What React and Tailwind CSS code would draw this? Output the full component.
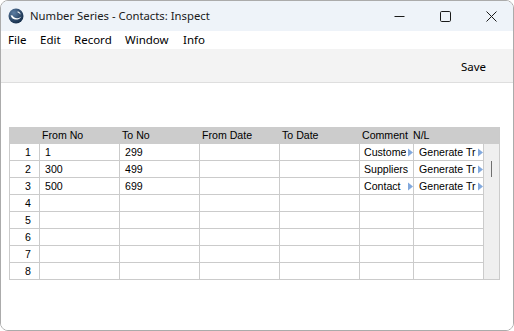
import React from "react";

const rows = [
  { n: "1", from: "1", to: "299", comment: "Custome", cTri: true, nl: "Generate Tr" },
  { n: "2", from: "300", to: "499", comment: "Suppliers", cTri: false, nl: "Generate Tr" },
  { n: "3", from: "500", to: "699", comment: "Contact", cTri: true, nl: "Generate Tr" },
  { n: "4" },
  { n: "5" },
  { n: "6" },
  { n: "7" },
  { n: "8" },
];

function Tri() {
  return (
    <span className="absolute right-0 top-1/2 -translate-y-1/2 flex h-[9px] w-[7px] items-center justify-end bg-white">
      <span className="h-0 w-0 border-y-[4px] border-y-transparent border-l-[5px] border-l-[#82a9dd]" />
    </span>
  );
}

function Logo() {
  return (
    <svg width="16" height="16" viewBox="0 0 16 16">
      <defs>
        <radialGradient id="lg" cx="0.35" cy="0.3" r="0.8">
          <stop offset="0" stopColor="#5d7ea3" />
          <stop offset="1" stopColor="#0e2643" />
        </radialGradient>
      </defs>
      <circle cx="8" cy="8" r="7.5" fill="url(#lg)" />
      <path d="M2.6 7.2 C3.6 12.2 10.4 13.4 13.4 8.4 C11.2 10.6 6.4 11.2 4.6 7.6 Z" fill="#fff" />
      <path d="M9.6 3.2 C11.4 3.6 12.6 5 12.6 6.6 C11.8 5.6 10.8 4.6 9.6 4.4 Z" fill="#fff" />
    </svg>
  );
}

export default function App() {
  const cellBase = "relative flex items-center overflow-hidden whitespace-nowrap border-r border-[#cbcbcb]";
  return (
    <div className="h-[331px] w-[514px] overflow-hidden bg-white">
      <div className="flex h-[331px] w-[514px] flex-col overflow-hidden rounded-[8px] border border-[#ababab] bg-white text-black">
        {/* Title bar */}
        <div className="flex h-[30px] shrink-0 items-center bg-[#eef3f9] font-['Noto_Sans',sans-serif] text-[11.3px] text-[#1a1a1a]">
          <div className="ml-[7px] flex h-[16px] w-[16px] items-center justify-center">
            <Logo />
          </div>
          <span className="ml-[6px] leading-none">Number Series - Contacts: Inspect</span>
          <div className="ml-auto flex h-full items-center">
            <div className="ml-[-8px] flex h-full w-[46px] items-center justify-center">
              <svg width="11" height="11" viewBox="0 0 11 11">
                <path d="M0.5 5.5 H10.5" stroke="#1a1a1a" strokeWidth="1" />
              </svg>
            </div>
            <div className="flex h-full w-[46px] items-center justify-center">
              <svg width="11" height="11" viewBox="0 0 11 11">
                <rect x="0.5" y="0.5" width="10" height="10" rx="1.2" fill="none" stroke="#1a1a1a" strokeWidth="1" />
              </svg>
            </div>
            <div className="mr-[-1px] flex h-full w-[46px] items-center justify-center">
              <svg width="11" height="11" viewBox="0 0 11 11">
                <path d="M0.5 0.5 L10.5 10.5 M10.5 0.5 L0.5 10.5" stroke="#1a1a1a" strokeWidth="1" />
              </svg>
            </div>
          </div>
        </div>

        {/* Menu bar */}
        <div className="flex h-[18px] shrink-0 items-center bg-white pl-[7px] font-['Noto_Sans',sans-serif] text-[11.5px] leading-none text-black">
          <span className="w-[32px]">File</span>
          <span className="w-[34px]">Edit</span>
          <span className="w-[51px]">Record</span>
          <span className="w-[58px]">Window</span>
          <span>Info</span>
        </div>

        {/* Toolbar */}
        <div className="flex h-[34px] shrink-0 items-center justify-end border-b border-[#dedede] bg-[#f3f3f3] pr-[27px] pt-[3px] font-['Noto_Sans',sans-serif] text-[11.5px] leading-none text-black">
          <span>Save</span>
        </div>

        {/* Content */}
        <div className="flex-1 bg-white pl-[8px] pt-[44px] font-['Liberation_Sans',Arial,sans-serif] text-[10.6px] leading-none text-black">
          <div className="w-[491px] border-x border-b border-[#cbcbcb]">
            {/* Header */}
            <div className="flex h-[17px] items-center bg-[#cccccc]">
              <span className="w-[30px]" />
              <span className="w-[80px] pl-[2px]">From No</span>
              <span className="w-[80px] pl-[2px]">To No</span>
              <span className="w-[80px] pl-[2px]">From Date</span>
              <span className="w-[80px] pl-[2px]">To Date</span>
              <span className="w-[52px] pl-[2px]">Comment</span>
              <span className="w-[72px] pl-[1px]">N/L</span>
            </div>
            {/* Body */}
            <div className="flex">
              <div className="flex w-[474px] flex-col">
                {rows.map((r, i) => (
                  <div
                    key={r.n}
                    className={
                      i < rows.length - 1
                        ? "grid h-[17px] grid-cols-[30px_80px_80px_80px_80px_54px_70px] border-b border-[#cbcbcb]"
                        : "grid h-[16px] grid-cols-[30px_80px_80px_80px_80px_54px_70px]"
                    }
                  >
                    <div className={cellBase + " justify-end pr-[8px]"}>{r.n}</div>
                    <div className={cellBase + " pl-[5px]"}>{r.from || ""}</div>
                    <div className={cellBase + " pl-[5px]"}>{r.to || ""}</div>
                    <div className={cellBase} />
                    <div className={cellBase} />
                    <div className={cellBase + " pl-[4px]"}>
                      {r.comment || ""}
                      {r.cTri ? <Tri /> : null}
                    </div>
                    <div className={cellBase + " pl-[5px]"}>
                      {r.nl || ""}
                      {r.nl ? <Tri /> : null}
                    </div>
                  </div>
                ))}
              </div>
              <div className="relative w-[15px] bg-[#efefef]">
                <div className="absolute left-[7px] top-[17px] h-[16px] w-px bg-[#707070]" />
              </div>
            </div>
          </div>
        </div>
      </div>
    </div>
  );
}
